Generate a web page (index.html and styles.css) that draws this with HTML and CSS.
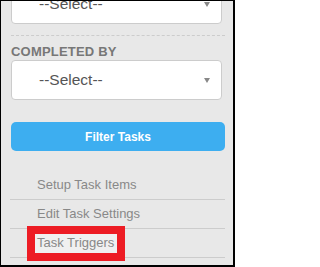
FILE: index.html
```html
<!DOCTYPE html>
<html>
<head>
<meta charset="utf-8">
<link rel="stylesheet" href="styles.css">
</head>
<body>
<div class="panel">
  <div class="select first"><span class="select-text">--Select--</span><span class="caret"></span></div>
  <div class="dashed"></div>
  <div class="label">COMPLETED BY</div>
  <div class="select"><span class="select-text">--Select--</span><span class="caret"></span></div>
  <button class="btn">Filter Tasks</button>
  <ul class="links">
    <li>Setup Task Items</li>
    <li>Edit Task Settings</li>
    <li><span class="highlight">Task Triggers</span></li>
  </ul>
</div>
</body>
</html>
```
FILE: styles.css
```css
html, body {
  margin: 0;
  padding: 0;
}
body {
  font-family: "Liberation Sans", Arial, sans-serif;
}
.panel {
  box-sizing: border-box;
  width: 235px;
  height: 267px;
  border: solid #000;
  border-width: 1px 2px 2px 1px;
  background: #e8e8e8;
  padding: 0 8px 0 10px;
  overflow: hidden;
}
.select {
  box-sizing: border-box;
  height: 40px;
  width: 211px;
  background: #fff;
  border: 1px solid #ccc;
  border-radius: 4px;
  display: flex;
  align-items: center;
  justify-content: space-between;
  padding: 0 11px 0 27px;
  font-size: 15.5px;
  color: #555;
}
.select.first {
  margin-top: -17px;
}
.caret {
  width: 0;
  height: 0;
  border-left: 3.5px solid transparent;
  border-right: 3.5px solid transparent;
  border-top: 5px solid #888;
}
.dashed {
  margin-top: 11px;
  height: 0;
  border-top: 1px dashed #ccc;
}
.label {
  margin: 8px 0 1px;
  font-size: 13px;
  line-height: 15px;
  font-weight: bold;
  color: #777;
  letter-spacing: 0.2px;
}
.btn {
  display: block;
  width: 100%;
  height: 29px;
  margin-top: 22px;
  border: 0;
  border-radius: 5px;
  background: #3daef0;
  color: #fff;
  font-family: "Liberation Sans", Arial, sans-serif;
  font-weight: bold;
  font-size: 12px;
  padding: 0;
}
.links {
  list-style: none;
  margin: 20px 0 0 -1px;
  padding: 0;
}
.links li {
  height: 28px;
  line-height: 28px;
  border-bottom: 1px solid #ccc;
  padding-left: 27px;
  font-size: 13px;
  color: #888;
}
.highlight {
  border: 8px solid #ed1c24;
  background: #f0f0f0;
  padding: 1px 3px 3px 2px;
  margin-left: -10px;
}
```
